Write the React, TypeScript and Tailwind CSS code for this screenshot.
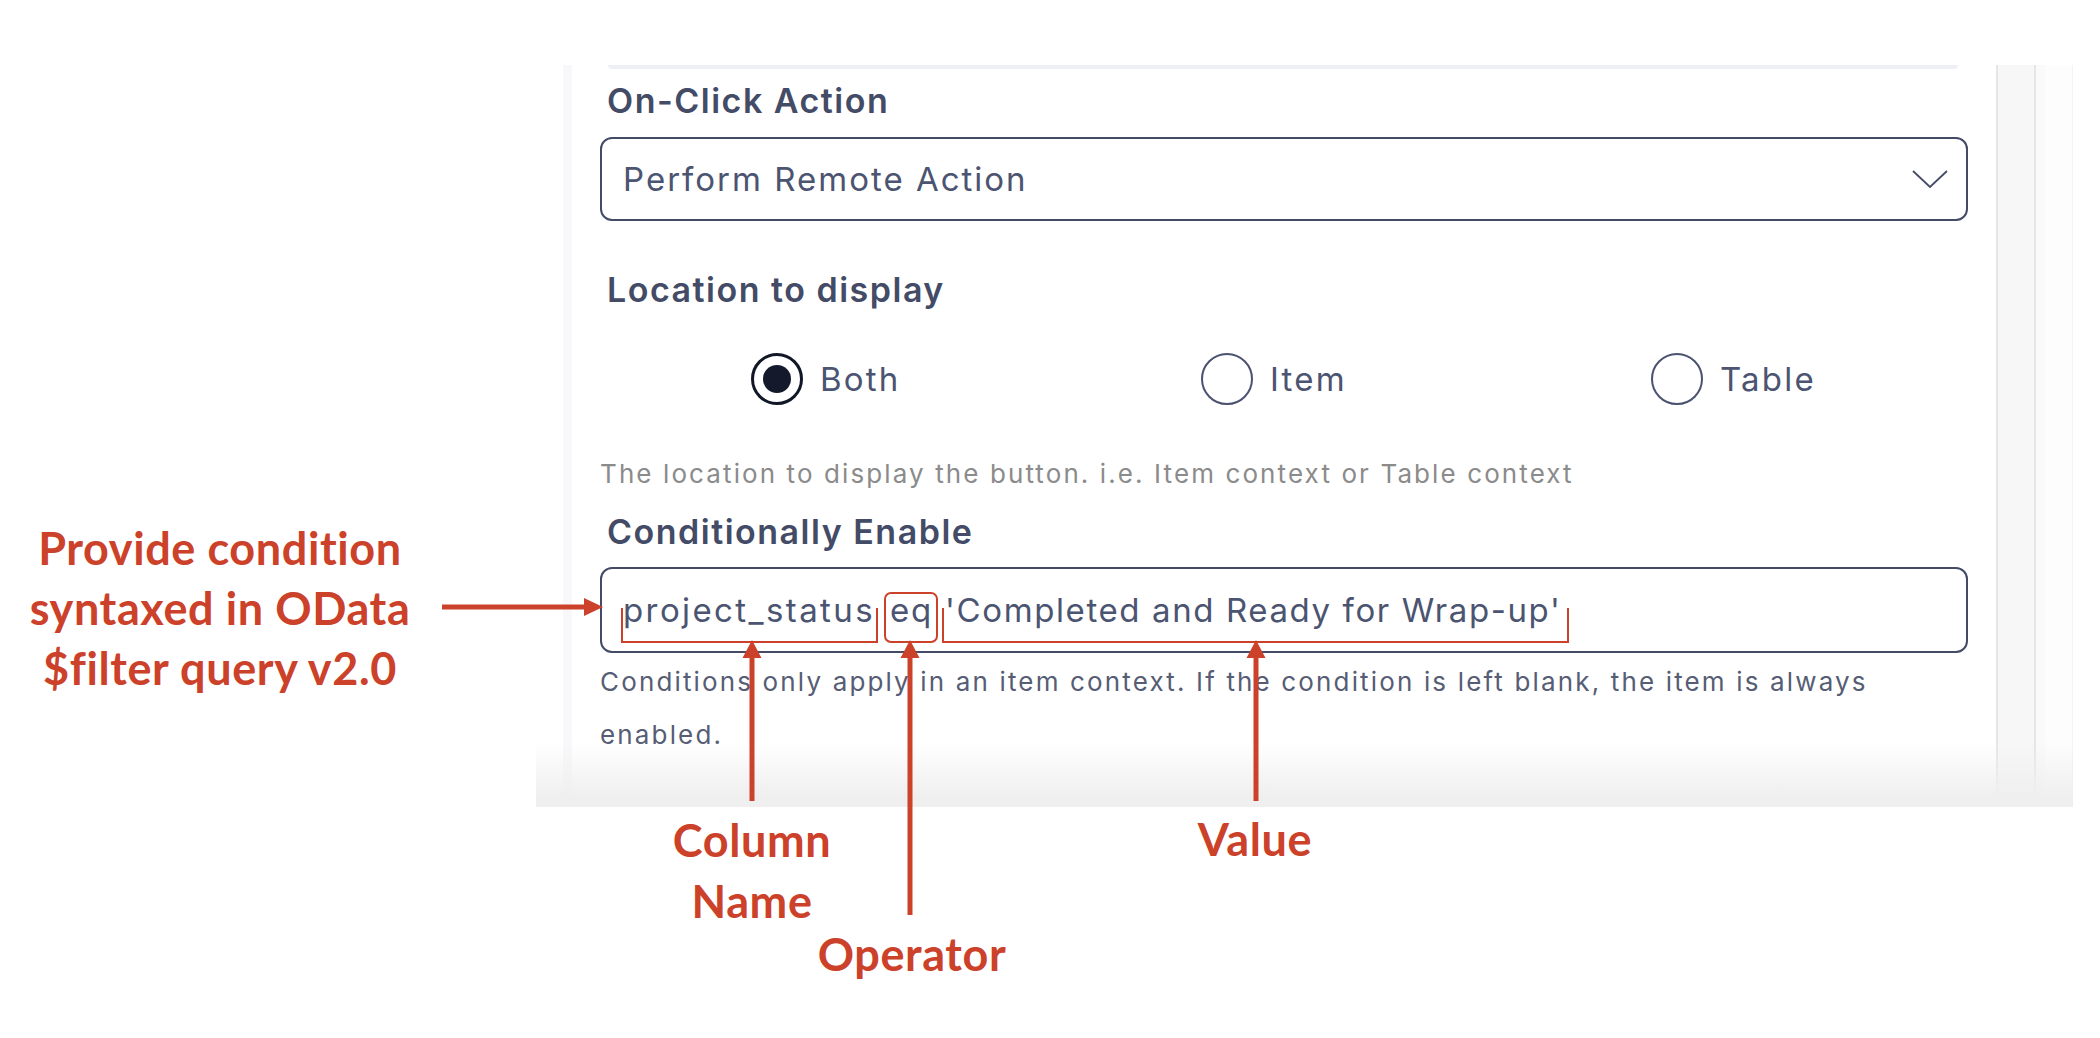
import React from 'react';

const Radio = ({ label, checked }: { label: string; checked?: boolean }) => (
    <label className="flex items-center gap-[17px]">
        {checked ? (
            <span className="flex h-[52px] w-[52px] items-center justify-center rounded-full border-[3px] border-[#111726]">
                <span className="h-[28px] w-[28px] rounded-full bg-[#141a2b]" />
            </span>
        ) : (
            <span className="h-[52px] w-[52px] rounded-full border-2 border-[#4a5270]" />
        )}
        <span className="text-[33px] leading-none tracking-[2.2px] text-[#4b5470]">{label}</span>
    </label>
);

const Heading = ({ children, className = '' }: { children: React.ReactNode; className?: string }) => (
    <h3 className={`text-[34px] font-semibold leading-[40px] tracking-[1.5px] text-[#434b66] ${className}`}>{children}</h3>
);

const Arrows = () => (
    <svg className="pointer-events-none absolute left-0 top-0" width="2100" height="1038" viewBox="0 0 2100 1038">
        <g fill="#cc4129" stroke="#cc4129">
            <line x1="442" y1="607" x2="588" y2="607" strokeWidth="5" />
            <polygon points="584,598 603,607 584,616" stroke="none" />
            <line x1="752" y1="801" x2="752" y2="655" strokeWidth="5" />
            <polygon points="742.5,658 761.5,658 752,640" stroke="none" />
            <line x1="910" y1="915" x2="910" y2="655" strokeWidth="5" />
            <polygon points="900.5,658 919.5,658 910,640" stroke="none" />
            <line x1="1256" y1="801" x2="1256" y2="655" strokeWidth="5" />
            <polygon points="1246.5,658 1265.5,658 1256,640" stroke="none" />
        </g>
    </svg>
);

const label = "absolute -translate-x-1/2 text-center font-['Lato',sans-serif] text-[45px] font-bold tracking-[0.6px] text-[#cc4129]";

export default function App() {
    return (
        <div className="relative flex h-[1038px] w-[2100px] overflow-hidden bg-white font-['Inter',sans-serif]">
            {/* left annotation */}
            <div className="w-[536px] shrink-0">
                <div className="mt-[518px] w-[440px] text-center font-['Lato',sans-serif] text-[45px] font-bold leading-[60px] tracking-[0.6px] text-[#cc4129]">
                    Provide condition
                    <br />
                    syntaxed in OData
                    <br />
                    $filter query v2.0
                </div>
            </div>

            {/* screenshot panel */}
            <div className="relative mt-[65px] flex h-[742px] w-[1537px] shrink-0 flex-col">
                <div className="flex flex-1">
                    <div className="w-[27px] bg-white" />
                    <div className="w-[9px] bg-[#f8f8fa]" />
                    <div className="flex w-[1424px] flex-col bg-white">
                        <div className="ml-[36px] mr-[38px] h-[4px] rounded-b-[10px] bg-[#eef0f6]" />
                        <div className="px-[28px]">
                            <Heading className="mt-[12px] pl-[7px]">On-Click Action</Heading>
                            <div className="mt-[16px] flex h-[84px] items-center justify-between rounded-[12px] border-2 border-[#434b66] pl-[21px] pr-[18px]">
                                <span className="text-[33px] leading-none tracking-[2px] text-[#4b5470]">Perform Remote Action</span>
                                <svg width="36" height="20" viewBox="0 0 36 20" fill="none">
                                    <polyline points="1,2 18,18 35,2" stroke="#434b66" strokeWidth="1.8" />
                                </svg>
                            </div>

                            <Heading className="mt-[49px] pl-[7px]">Location to display</Heading>
                            <div className="mt-[43px] grid grid-cols-[450px_450px_450px] pl-[151px]">
                                <Radio label="Both" checked />
                                <Radio label="Item" />
                                <Radio label="Table" />
                            </div>
                            <p className="mt-[53px] text-[26px] leading-[32px] tracking-[2.1px] text-[#8b8b8b]">
                                The location to display the button. i.e. Item context or Table context
                            </p>

                            <Heading className="mt-[22px] pl-[7px]">Conditionally Enable</Heading>
                            <div className="mt-[15px] flex h-[86px] items-center rounded-[12px] border-2 border-[#434b66] pl-[21px] text-[33px] leading-none text-[#4b5470]">
                                <span className="relative inline-block tracking-[2.4px]">
                                    project_status
                                    <span className="absolute -left-[2px] -right-[3px] top-[14px] h-[35px] border-2 border-t-0 border-[#cc4129]" />
                                </span>
                                <span className="w-[15px]" />
                                <span className="relative inline-block tracking-[1.8px]">
                                    eq
                                    <span className="absolute -left-[6px] -right-[5px] -top-[2px] h-[51px] rounded-[7px] border-2 border-[#cc4129]" />
                                </span>
                                <span className="w-[12px]" />
                                <span className="relative inline-block tracking-[1.6px]">
                                    'Completed and Ready for Wrap-up'
                                    <span className="absolute -left-[3px] -right-[8px] top-[14px] h-[35px] border-2 border-t-0 border-[#cc4129]" />
                                </span>
                            </div>
                            <p className="mt-[2px] text-[26px] leading-[53px] tracking-[2.15px] text-[#565d75]">
                                Conditions only apply in an item context. If the condition is left blank, the item is always
                                <br />
                                enabled.
                            </p>
                        </div>
                    </div>
                    <div className="w-[2px] bg-[#e6e6e6]" />
                    <div className="w-[36px] bg-[#f7f7f8]" />
                    <div className="w-[2px] bg-[#e6e6e6]" />
                    <div className="w-[9px] bg-[#fafafa]" />
                    <div className="w-[28px] border-r border-[#f3f3f3] bg-[#fdfdfd]" />
                </div>
                <div className="h-[10px] bg-[#efefef]" />
                <div className="pointer-events-none absolute bottom-[10px] left-0 right-0 h-[55px] bg-gradient-to-b from-white/0 to-[#efefef]" />
            </div>

            {/* bottom labels */}
            <div className={`${label} left-[752px] top-[810px] leading-[61px]`}>
                Column
                <br />
                Name
            </div>
            <div className={`${label} left-[912px] top-[925px] leading-[58px]`}>Operator</div>
            <div className={`${label} left-[1255px] top-[810px] leading-[58px]`}>Value</div>

            <Arrows />
        </div>
    );
}
